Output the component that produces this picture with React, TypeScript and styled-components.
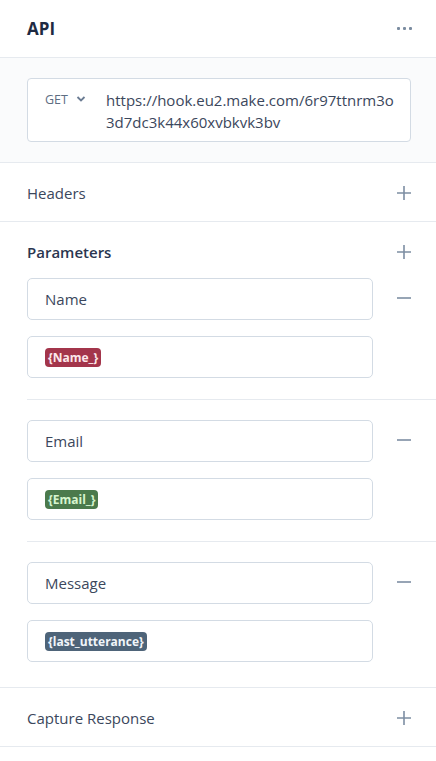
import React from "react";
import styled, { createGlobalStyle } from "styled-components";

const GlobalStyle = createGlobalStyle`
  body {
    margin: 0;
    background: #fff;
    font-family: "Open Sans", "Liberation Sans", sans-serif;
    color: #3b475c;
  }
`;

interface Param {
  key: string;
  value: string;
  tone: "red" | "green" | "slate";
}

const params: Param[] = [
  { key: "Name", value: "{Name_}", tone: "red" },
  { key: "Email", value: "{Email_}", tone: "green" },
  { key: "Message", value: "{last_utterance}", tone: "slate" },
];

const tagColors = {
  red: { bg: "#a3354b", fg: "#fbe7ea" },
  green: { bg: "#4b7a4c", fg: "#d7f5cf" },
  slate: { bg: "#4e6479", fg: "#f1f5f9" },
};

const PlusIcon = () => (
  <svg width="16" height="16" viewBox="0 0 16 16">
    <path d="M8 1v14M1 8h14" stroke="#7d8ea3" strokeWidth="1.6" />
  </svg>
);

const MinusIcon = () => (
  <svg width="16" height="16" viewBox="0 0 16 16">
    <path d="M1 8h14" stroke="#7d8ea3" strokeWidth="1.6" />
  </svg>
);

const Chevron = () => (
  <svg width="10" height="8" viewBox="0 0 10 8">
    <path d="M1.5 2l3.5 3.5L8.5 2" stroke="#6b7c93" strokeWidth="1.8" fill="none" />
  </svg>
);

const App: React.FC = () => {
  return (
    <>
      <GlobalStyle />
      <Panel>
        <Header>
          <Title>API</Title>
          <Dots>
            <span />
            <span />
            <span />
          </Dots>
        </Header>

        <UrlSection>
          <UrlBox>
            <Method>
              GET <Chevron />
            </Method>
            <Url>https://hook.eu2.make.com/6r97ttnrm3o3d7dc3k44x60xvbkvk3bv</Url>
          </UrlBox>
        </UrlSection>

        <Row>
          <RowLabel>Headers</RowLabel>
          <IconButton>
            <PlusIcon />
          </IconButton>
        </Row>

        <ParamSection>
          <ParamHead>
            <RowLabel bold>Parameters</RowLabel>
            <IconButton>
              <PlusIcon />
            </IconButton>
          </ParamHead>
          {params.map((p, i) => (
            <ParamGroup key={p.key} last={i === params.length - 1}>
              <Fields>
                <Field>{p.key}</Field>
                <Field>
                  <Tag tone={p.tone}>{p.value}</Tag>
                </Field>
              </Fields>
              <RemoveButton>
                <MinusIcon />
              </RemoveButton>
            </ParamGroup>
          ))}
        </ParamSection>

        <Row>
          <RowLabel>Capture Response</RowLabel>
          <IconButton>
            <PlusIcon />
          </IconButton>
        </Row>
      </Panel>
    </>
  );
};

export default App;

const Panel = styled.div`
  width: 436px;
  background: #fff;
`;

const Header = styled.div`
  height: 57px;
  display: flex;
  align-items: center;
  justify-content: space-between;
  padding: 0 24px 0 27px;
  border-bottom: 1px solid #e6eaef;
`;

const Title = styled.h1`
  margin: 0;
  font-size: 17px;
  font-weight: 700;
  color: #1e2a42;
`;

const Dots = styled.div`
  display: flex;
  gap: 3px;
  span {
    width: 3px;
    height: 3px;
    border-radius: 1px;
    background: #7b8ca0;
  }
`;

const UrlSection = styled.div`
  background: #fafbfc;
  padding: 20px 25px 20px 27px;
  border-bottom: 1px solid #e6eaef;
`;

const UrlBox = styled.div`
  display: flex;
  align-items: flex-start;
  background: #fff;
  border: 1px solid #d3dbe4;
  border-radius: 4px;
  padding: 10px 16px 8px 17px;
`;

const Method = styled.div`
  display: flex;
  align-items: center;
  gap: 8px;
  width: 61px;
  flex-shrink: 0;
  font-size: 12.5px;
  line-height: 22px;
  color: #5d6d82;
  svg {
    margin-top: -2px;
  }
`;

const Url = styled.div`
  font-size: 15px;
  line-height: 22px;
  color: #3b475c;
  word-break: break-all;
`;

const Row = styled.div`
  height: 57px;
  display: flex;
  align-items: center;
  justify-content: space-between;
  padding: 1px 24px 0 27px;
  border-bottom: 1px solid #e6eaef;
`;

const RowLabel = styled.div<{ bold?: boolean }>`
  font-size: 15px;
  font-weight: ${(p) => (p.bold ? 600 : 400)};
  color: ${(p) => (p.bold ? "#2a3650" : "#3b475c")};
`;

const IconButton = styled.div`
  display: flex;
  width: 16px;
  height: 16px;
`;

const ParamSection = styled.div`
  padding: 19px 0 0 27px;
  border-bottom: 1px solid #e6eaef;
`;

const ParamHead = styled.div`
  display: flex;
  align-items: center;
  justify-content: space-between;
  padding-right: 24px;
  height: 22px;
  margin-bottom: 15px;
`;

const ParamGroup = styled.div<{ last?: boolean }>`
  display: flex;
  align-items: flex-start;
  padding: ${(p) => (p.last ? "0 24px 25px 0" : "0 24px 21px 0")};
  margin-bottom: ${(p) => (p.last ? "0" : "20px")};
  border-bottom: ${(p) => (p.last ? "none" : "1px solid #e6eaef")};
`;

const Fields = styled.div`
  flex: 1;
  display: flex;
  flex-direction: column;
  gap: 16px;
`;

const Field = styled.div`
  height: 42px;
  box-sizing: border-box;
  display: flex;
  align-items: center;
  padding: 0 17px;
  border: 1px solid #d3dbe4;
  border-radius: 5px;
  font-size: 15px;
  color: #3b475c;
`;

const RemoveButton = styled.div`
  display: flex;
  width: 16px;
  height: 16px;
  margin: 12px 0 0 23px;
`;

const Tag = styled.span<{ tone: "red" | "green" | "slate" }>`
  display: inline-block;
  padding: 1px 3px;
  border-radius: 4px;
  font-size: 12px;
  font-weight: 700;
  line-height: 17px;
  background: ${(p) => tagColors[p.tone].bg};
  color: ${(p) => tagColors[p.tone].fg};
`;
